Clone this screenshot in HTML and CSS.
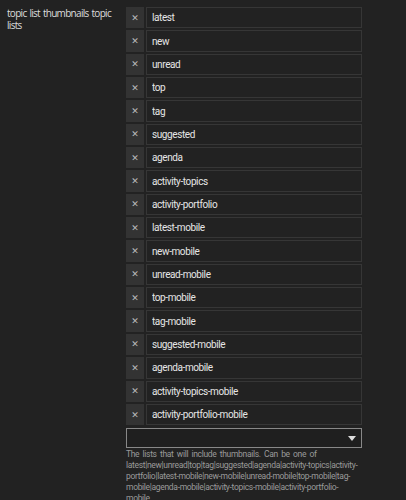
FILE: index.html
```html
<!DOCTYPE html>
<html lang="en">
<head>
    <meta charset="utf-8">
    <title>topic list thumbnails</title>
    <link rel="stylesheet" href="styles.css">
</head>
<body>
<div class="setting">
    <div class="setting-label">topic list thumbnails topic lists</div>
    <div class="setting-value">
        <ul class="values">
            <li class="value"><button class="remove">&#x2715;</button><input class="value-input" value="latest"></li>
            <li class="value"><button class="remove">&#x2715;</button><input class="value-input" value="new"></li>
            <li class="value"><button class="remove">&#x2715;</button><input class="value-input" value="unread"></li>
            <li class="value"><button class="remove">&#x2715;</button><input class="value-input" value="top"></li>
            <li class="value"><button class="remove">&#x2715;</button><input class="value-input" value="tag"></li>
            <li class="value"><button class="remove">&#x2715;</button><input class="value-input" value="suggested"></li>
            <li class="value"><button class="remove">&#x2715;</button><input class="value-input" value="agenda"></li>
            <li class="value"><button class="remove">&#x2715;</button><input class="value-input" value="activity-topics"></li>
            <li class="value"><button class="remove">&#x2715;</button><input class="value-input" value="activity-portfolio"></li>
            <li class="value"><button class="remove">&#x2715;</button><input class="value-input" value="latest-mobile"></li>
            <li class="value"><button class="remove">&#x2715;</button><input class="value-input" value="new-mobile"></li>
            <li class="value"><button class="remove">&#x2715;</button><input class="value-input" value="unread-mobile"></li>
            <li class="value"><button class="remove">&#x2715;</button><input class="value-input" value="top-mobile"></li>
            <li class="value"><button class="remove">&#x2715;</button><input class="value-input" value="tag-mobile"></li>
            <li class="value"><button class="remove">&#x2715;</button><input class="value-input" value="suggested-mobile"></li>
            <li class="value"><button class="remove">&#x2715;</button><input class="value-input" value="agenda-mobile"></li>
            <li class="value"><button class="remove">&#x2715;</button><input class="value-input" value="activity-topics-mobile"></li>
            <li class="value"><button class="remove">&#x2715;</button><input class="value-input" value="activity-portfolio-mobile"></li>
        </ul>
        <!-- 下拉框 -->
        <div class="combo">
            <svg class="caret" width="8" height="5" viewBox="0 0 8 5"><path d="M0 0H8L4 5Z" fill="#ddd"/></svg>
        </div>
        <div class="desc">The lists that will include thumbnails. Can be one of latest|new|unread|top|tag|suggested|agenda|activity-topics|activity-portfolio|latest-mobile|new-mobile|unread-mobile|top-mobile|tag-mobile|agenda-mobile|activity-topics-mobile|activity-portfolio-mobile</div>
    </div>
</div>
</body>
</html>
```

FILE: styles.css
```css
* {
    margin: 0;
    padding: 0;
    box-sizing: border-box;
}

body {
    background-color: #222222;
    overflow: hidden;
}

.setting {
    display: flex;
    padding: 7px 0 0 7px;
}

/* 左边的标题 */
.setting-label {
    width: 119px;
    font-family: "Open Sans", sans-serif;
    font-size: 10px;
    letter-spacing: -0.7px;
    word-spacing: 1px;
    line-height: 12px;
    color: #dddddd;
}

.setting-value {
    width: 236px;
}

.values {
    list-style: none;
}

.value {
    display: flex;
    gap: 2px;
    height: 21.35px;
    margin-bottom: 2px;
}

/* 删除按钮 */
.remove {
    width: 18px;
    flex: none;
    border: none;
    background-color: #333333;
    color: #bbbbbb;
    font-size: 9px;
    font-family: "DejaVu Sans", sans-serif;
}

.value-input {
    flex: 1;
    min-width: 0;
    background-color: #222222;
    border: 1px solid #363636;
    padding-left: 5px;
    font-family: Roboto, sans-serif;
    font-size: 10px;
    letter-spacing: -0.4px;
    color: #e6e6e6;
    outline: none;
}

.combo {
    position: relative;
    height: 20px;
    margin-top: 3px;
    border: 1px solid #888888;
    background-color: #1f1f1f;
}

.caret {
    position: absolute;
    right: 5px;
    top: 7px;
}

.desc {
    margin-top: 1px;
    padding-right: 2px;
    font-family: Roboto, sans-serif;
    font-size: 8.5px;
    letter-spacing: -0.32px;
    word-spacing: 1.5px;
    line-height: 11px;
    color: #9a9a9a;
}
```
